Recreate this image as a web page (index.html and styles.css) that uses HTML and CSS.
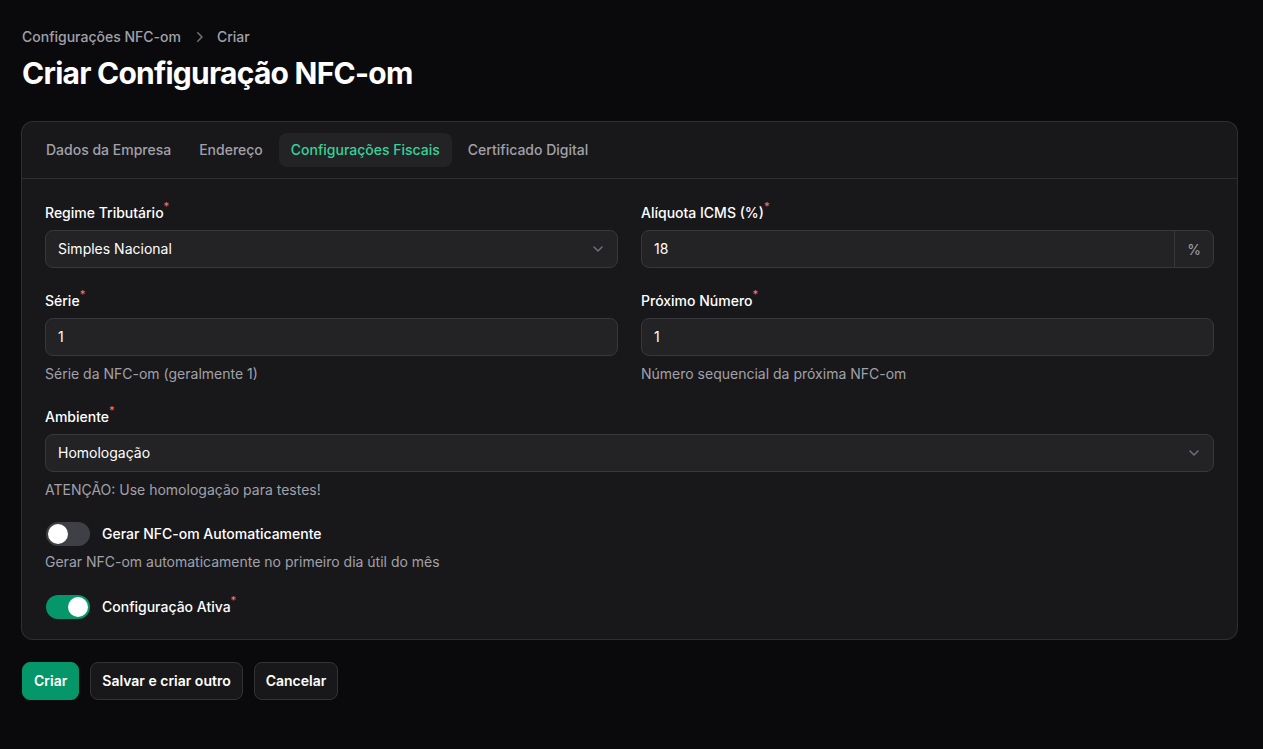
FILE: index.html
```html
<!DOCTYPE html>
<html lang="pt-BR">
<head>
  <meta charset="UTF-8">
  <meta name="viewport" content="width=device-width, initial-scale=1">
  <title>Criar Configuração NFC-om</title>
  <link rel="stylesheet" href="styles.css">
</head>
<body>
  <main class="page">
    <header class="page-header">
      <nav class="breadcrumbs">
        <a href="#">Configurações NFC-om</a>
        <svg class="crumb-icon" width="20" height="20" viewBox="0 0 20 20" fill="currentColor">
          <path fill-rule="evenodd" d="M8.22 5.22a.75.75 0 0 1 1.06 0l4.25 4.25a.75.75 0 0 1 0 1.06l-4.25 4.25a.75.75 0 0 1-1.060-1.06L11.94 10 8.22 6.28a.75.75 0 0 1 0-1.06Z" clip-rule="evenodd"/>
        </svg>
        <a href="#">Criar</a>
      </nav>
      <h1 class="heading">Criar Configuração NFC-om</h1>
    </header>

    <form class="form">
      <section class="card">
        <nav class="tabs">
          <button type="button" class="tab">Dados da Empresa</button>
          <button type="button" class="tab">Endereço</button>
          <button type="button" class="tab active">Configurações Fiscais</button>
          <button type="button" class="tab">Certificado Digital</button>
        </nav>

        <div class="tab-body">
          <div class="grid">
            <div class="field">
              <label class="label">Regime Tributário<sup>*</sup></label>
              <div class="input-wrap select">
                <span class="value">Simples Nacional</span>
                <svg class="chevron" width="20" height="20" viewBox="0 0 20 20" fill="none">
                  <path d="M6 8l4 4 4-4" stroke="currentColor" stroke-width="1.5" stroke-linecap="round" stroke-linejoin="round"/>
                </svg>
              </div>
            </div>
            <div class="field">
              <label class="label">Alíquota ICMS (%)<sup>*</sup></label>
              <div class="input-wrap">
                <span class="value">18</span>
                <span class="suffix">%</span>
              </div>
            </div>

            <div class="field">
              <label class="label">Série<sup>*</sup></label>
              <div class="input-wrap"><span class="value">1</span></div>
              <p class="hint">Série da NFC-om (geralmente 1)</p>
            </div>
            <div class="field">
              <label class="label">Próximo Número<sup>*</sup></label>
              <div class="input-wrap"><span class="value">1</span></div>
              <p class="hint">Número sequencial da próxima NFC-om</p>
            </div>

            <div class="field span-2">
              <label class="label">Ambiente<sup>*</sup></label>
              <div class="input-wrap select">
                <span class="value">Homologação</span>
                <svg class="chevron" width="20" height="20" viewBox="0 0 20 20" fill="none">
                  <path d="M6 8l4 4 4-4" stroke="currentColor" stroke-width="1.5" stroke-linecap="round" stroke-linejoin="round"/>
                </svg>
              </div>
              <p class="hint">ATENÇÃO: Use homologação para testes!</p>
            </div>

            <div class="field span-2 toggle-field">
              <div class="toggle-row">
                <span class="toggle"><span class="thumb"></span></span>
                <span class="label">Gerar NFC-om Automaticamente</span>
              </div>
              <p class="hint">Gerar NFC-om automaticamente no primeiro dia útil do mês</p>
            </div>

            <div class="field span-2">
              <div class="toggle-row">
                <span class="toggle on"><span class="thumb"></span></span>
                <span class="label">Configuração Ativa<sup>*</sup></span>
              </div>
            </div>
          </div>
        </div>
      </section>

      <div class="actions">
        <button type="button" class="btn primary">Criar</button>
        <button type="button" class="btn">Salvar e criar outro</button>
        <button type="button" class="btn">Cancelar</button>
      </div>
    </form>
  </main>
</body>
</html>
```

FILE: styles.css
```css
:root {
  --bg: #0a0a0c;
  --card: #18181b;
  --input: #232326;
  --ring: rgba(255, 255, 255, 0.1);
  --text: #ffffff;
  --muted: #a1a1aa;
  --primary: #059669;
  --primary-text: #34d399;
  --danger: #f87171;
}

html, body {
  margin: 0;
  padding: 0;
  background: var(--bg);
  color: var(--text);
  font-family: 'Inter', 'Noto Sans', sans-serif;
  -webkit-font-smoothing: antialiased;
}

.page {
  padding: 27px 25px 40px 21px;
}

.page-header {
  display: flex;
  flex-direction: column;
  gap: 8px;
  padding-left: 1px;
}

.breadcrumbs {
  display: flex;
  align-items: center;
  gap: 8px;
  font-size: 14px;
  line-height: 20px;
  font-weight: 500;
}

.breadcrumbs a {
  color: var(--muted);
  text-decoration: none;
}

.crumb-icon {
  color: #71717a;
}

.heading {
  margin: 0;
  font-size: 30px;
  line-height: 36px;
  font-weight: 700;
  letter-spacing: -0.025em;
}

.form {
  margin-top: 30px;
  display: flex;
  flex-direction: column;
  gap: 22px;
}

.card {
  background: var(--card);
  border: 1px solid var(--ring);
  border-radius: 12px;
}

.tabs {
  display: flex;
  gap: 4px;
  padding: 11px 12px;
  border-bottom: 1px solid var(--ring);
}

.tab {
  font-family: inherit;
  font-size: 14px;
  line-height: 20px;
  font-weight: 500;
  color: var(--muted);
  background: transparent;
  border: none;
  border-radius: 8px;
  padding: 7px 12px;
  cursor: pointer;
}

.tab.active {
  background: rgba(255, 255, 255, 0.05);
  color: var(--primary-text);
}

.tab-body {
  padding: 24px 23px 20px 23px;
}

.grid {
  display: grid;
  grid-template-columns: 1fr 1fr;
  column-gap: 23px;
  row-gap: 23px;
}

.span-2 {
  grid-column: span 2;
}

.field {
  display: flex;
  flex-direction: column;
  gap: 7px;
}

.toggle-field {
  margin-top: -1px;
}

.label {
  font-size: 14px;
  line-height: 20px;
  font-weight: 500;
  color: var(--text);
}

.label sup {
  color: var(--danger);
  font-weight: 500;
  font-size: 11px;
  line-height: 0;
  vertical-align: top;
  position: relative;
  top: 3px;
}

.input-wrap {
  display: flex;
  align-items: center;
  height: 36px;
  background: var(--input);
  border: 1px solid #38383c;
  border-radius: 8px;
  font-size: 14px;
}

.input-wrap .value {
  flex: 1;
  padding: 0 12px;
  line-height: 24px;
  color: var(--text);
}

.suffix {
  align-self: stretch;
  display: flex;
  align-items: center;
  padding: 0 12px;
  border-left: 1px solid #38383c;
  color: var(--muted);
}

.chevron {
  color: #6e6e82;
  margin-right: 9px;
}

.hint {
  margin: 1px 0 0;
  font-size: 14px;
  line-height: 20px;
  color: var(--muted);
}

.toggle-row {
  display: flex;
  align-items: center;
  gap: 12px;
  padding-left: 1px;
}

.toggle-row + .hint {
  margin-top: -1px;
}

.toggle {
  width: 44px;
  height: 24px;
  border-radius: 999px;
  background: #3f3f46;
  display: flex;
  align-items: center;
  padding: 2px;
  box-sizing: border-box;
}

.toggle .thumb {
  width: 20px;
  height: 20px;
  border-radius: 50%;
  background: #fff;
}

.toggle.on {
  background: var(--primary);
  justify-content: flex-end;
}

.actions {
  display: flex;
  gap: 11px;
  padding-left: 1px;
}

.btn {
  font-family: inherit;
  font-size: 14px;
  line-height: 20px;
  font-weight: 600;
  color: var(--text);
  background: #18181b;
  border: 1px solid #333337;
  border-radius: 8px;
  padding: 8px 11px;
  cursor: pointer;
}

.btn.primary {
  background: var(--primary);
  border-color: var(--primary);
}
```
